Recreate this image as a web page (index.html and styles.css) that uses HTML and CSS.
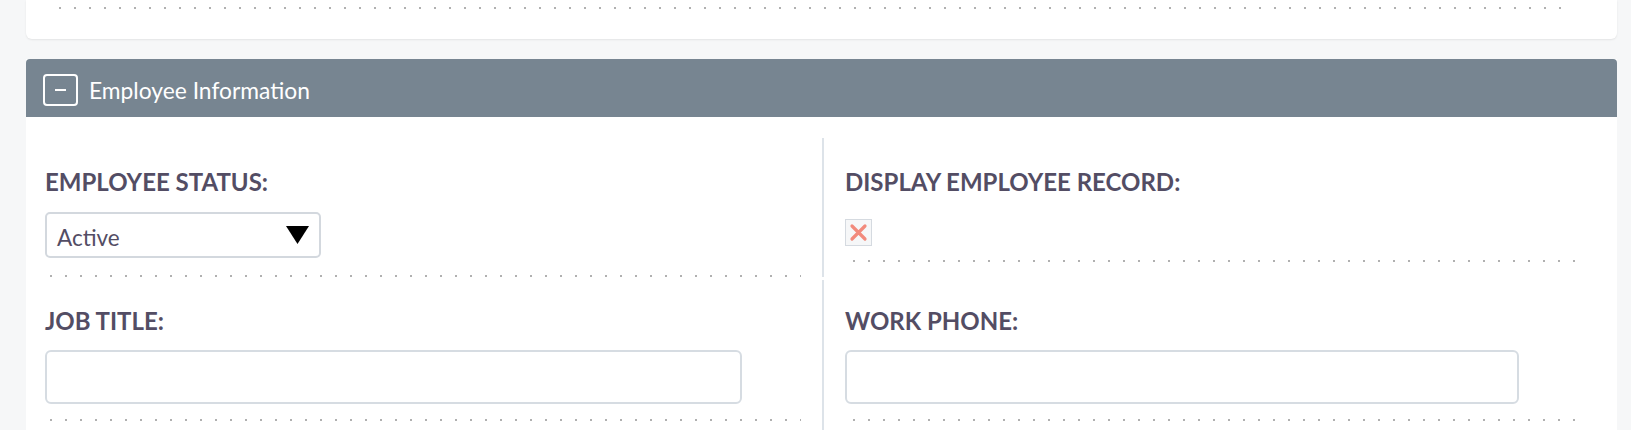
FILE: index.html
```html
<!DOCTYPE html>
<html lang="en">
<head>
    <meta charset="UTF-8">
    <meta name="viewport" content="width=device-width, initial-scale=1.0">
    <title>Employee Information</title>
    <link rel="stylesheet" href="styles.css">
</head>
<body>

    <!-- bottom of the previous panel -->
    <div class="panel-prev">
        <div class="dots"></div>
    </div>

    <div class="panel">
        <div class="panel-heading">
            <span class="toggle"></span>
            <span class="panel-title">Employee Information</span>
        </div>

        <div class="panel-body">
            <div class="cell">
                <div class="label">Employee Status:</div>
                <div class="select">
                    <span>Active</span>
                    <svg class="caret" width="23" height="18" viewBox="0 0 23 18">
                        <polygon points="0,0 23,0 11.5,18" fill="#000"/>
                    </svg>
                </div>
                <div class="dots dots-left"></div>
            </div>
            <div class="cell cell-right">
                <div class="label">Display Employee Record:</div>
                <svg class="check-x" width="27" height="27" viewBox="0 0 27 27">
                    <rect x="0.5" y="0.5" width="26" height="26" fill="#f6f7f8" stroke="#d5dae0"/>
                    <path d="M7 7 L20 20 M20 7 L7 20" stroke="#f28a7c" stroke-width="3.2" stroke-linecap="round"/>
                </svg>
                <div class="dots dots-right"></div>
            </div>

            <div class="cell">
                <div class="label">Job Title:</div>
                <input type="text" class="text-input">
                <div class="dots dots-left"></div>
            </div>
            <div class="cell cell-right">
                <div class="label">Work Phone:</div>
                <input type="text" class="text-input">
                <div class="dots dots-right"></div>
            </div>
        </div>
    </div>

</body>
</html>
```

FILE: styles.css
```css
* {
    box-sizing: border-box;
}

body {
    margin: 0;
    padding: 0 14px 0 26px;
    background-color: #f6f7f8;
    font-family: Lato, "Liberation Sans", sans-serif;
    color: #534d64;
}

.dots {
    height: 2px;
    background-image: linear-gradient(90deg, #b0b0b0 0, #b0b0b0 2px, transparent 2px);
    background-size: 15px 2px;
}

.panel-prev {
    height: 39px;
    padding: 7px 44px 0 33px;
    background-color: #ffffff;
    border-radius: 0 0 6px 6px;
    box-shadow: 0 1px 2px rgba(0, 0, 0, 0.08);
}

.panel {
    margin-top: 20px;
    background-color: #ffffff;
}

.panel-heading {
    display: flex;
    align-items: flex-start;
    height: 58px;
    padding: 15px 0 0 17px;
    background-color: #778591;
    border-radius: 4px 4px 0 0;
    color: #ffffff;
}

.toggle {
    display: flex;
    align-items: center;
    justify-content: center;
    width: 35px;
    height: 32px;
    border: 2px solid #ffffff;
    border-radius: 4px;
}

.toggle::before {
    content: '';
    width: 11px;
    height: 2px;
    background: #ffffff;
}

.panel-title {
    margin-left: 11px;
    font-size: 22.8px;
    font-weight: normal;
    line-height: 32px;
}

.panel-body {
    display: grid;
    grid-template-columns: 796px 1fr;
    row-gap: 3px;
    padding-top: 21px;
}

.cell {
    padding: 31px 21px 0 19px;
}

.cell-right {
    border-left: 2px solid #dde3e9;
    padding: 31px 41px 0 21px;
}

.cell:nth-child(n+3) {
    padding-top: 28px;
    padding-bottom: 30px;
}

.label {
    font-size: 24px;
    font-weight: bold;
    line-height: 26px;
    text-transform: uppercase;
}

.select {
    display: flex;
    align-items: center;
    justify-content: space-between;
    width: 276px;
    height: 46px;
    margin-top: 17px;
    padding: 5px 10px 0 10px;
    border: 2px solid #d3d8de;
    border-radius: 5px;
    font-size: 22.5px;
}

.caret {
    margin-top: -5px;
}

.dots-left {
    margin: 17px 0 0 5px;
}

.check-x {
    display: block;
    margin-top: 24px;
}

.cell-right .dots {
    margin: 14px 0 0 8px;
}

.text-input {
    display: block;
    width: 92.2%;
    height: 54px;
    margin-top: 16px;
    border: 2px solid #d6dce2;
    border-radius: 6px;
    background: #ffffff;
}

.text-input + .dots {
    margin-top: 15px;
}
```
